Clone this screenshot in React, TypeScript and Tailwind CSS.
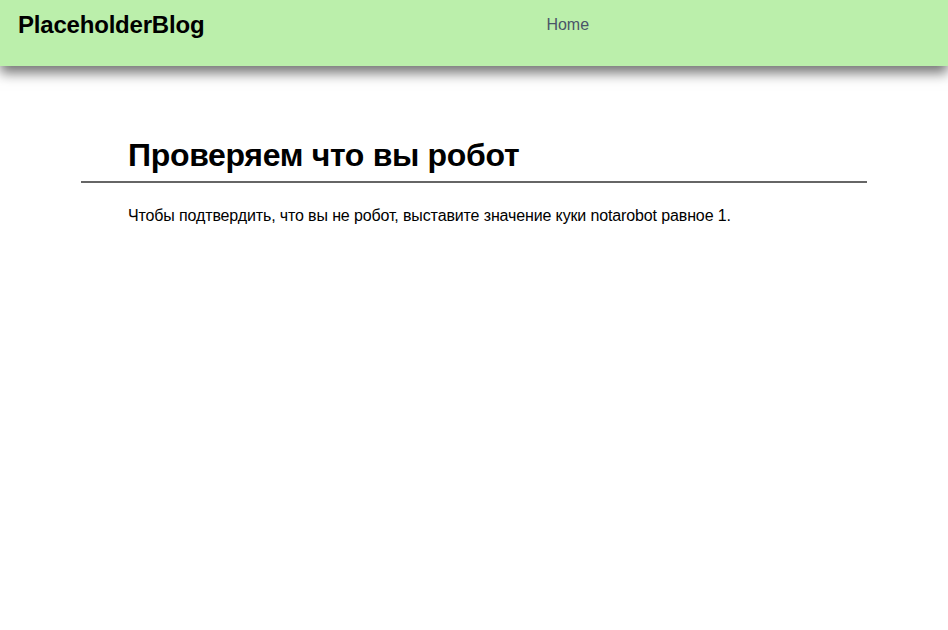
import React from "react";

const App = () => {
    return (
        <div className="min-h-screen bg-white font-['Liberation_Sans',Arial,sans-serif] text-black">
            <header className="h-[66px] bg-[#bbefab] shadow-[0_7px_12px_rgba(0,0,0,0.55)] flex items-start relative">
                <a href="#" className="ml-[18px] mt-[11px] text-[24px] font-bold leading-[normal] tracking-[-0.2px]">
                    PlaceholderBlog
                </a>
                <nav className="ml-[342px] mt-[13px]">
                    <a href="#" className="text-[16px] leading-[normal] text-[#4a5568]">Home</a>
                </nav>
            </header>

            <main className="w-[786px] mx-auto pt-[71px]">
                <h1 className="pl-[47px] text-[32px] font-bold leading-[normal] tracking-[-0.32px]">
                    Проверяем что вы робот
                </h1>
                <hr className="mt-[7px] border-0 border-t-2 border-[#666666]" />
                <p className="pl-[47px] mt-[24px] text-[16px] leading-[normal] tracking-[-0.13px]">
                    Чтобы подтвердить, что вы не робот, выставите значение куки notarobot равное 1.
                </p>
            </main>
        </div>
    );
};

export default App;
